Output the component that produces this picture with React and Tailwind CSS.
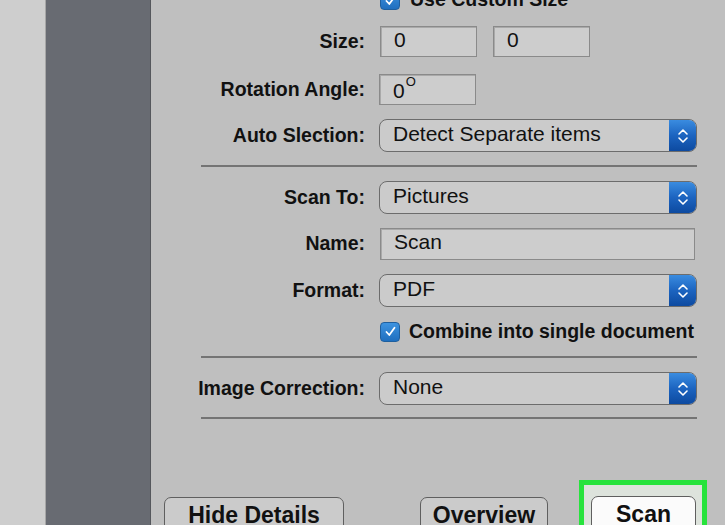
import React from "react";

// ------------------------------------------------------------------
// small pieces
// ------------------------------------------------------------------
const Check = ({ className = "" }) => (
  <span
    className={`flex h-[20px] w-[20px] shrink-0 items-center justify-center rounded-[4px] border border-[#1f5f9e] bg-gradient-to-b from-[#3d93e0] to-[#1f6fbf] ${className}`}
  >
    <svg width="13" height="13" viewBox="0 0 13 13" fill="none">
      <path d="M2.5 7 L5.3 10 L10.5 2.8" stroke="white" strokeWidth="1.8" strokeLinecap="round" strokeLinejoin="round" />
    </svg>
  </span>
);

const Label = ({ children }) => (
  <span className="flex w-[165px] shrink-0 justify-end whitespace-nowrap pr-[1px] text-[19.5px] font-bold text-[#111]">
    <span>{children}</span>
  </span>
);

const Select = ({ value }) => (
  <div className="ml-[13px] flex h-[33px] w-[318px] items-stretch overflow-hidden rounded-[8px] border border-[#6c6c6c] bg-[#cbcbcb]">
    <span className="flex-1 pl-[13px] pb-[5px] text-[21px] leading-[27px] text-[#111]">{value}</span>
    <span className="flex w-[27px] items-center justify-center bg-gradient-to-b from-[#3a8ce0] via-[#1c64c0] to-[#0d4aa0]">
      <svg width="12" height="20" viewBox="0 0 12 20" fill="none">
        <path d="M2 8 L6 4 L10 8" stroke="white" strokeWidth="1.6" strokeLinecap="round" strokeLinejoin="round" />
        <path d="M2 12 L6 16 L10 12" stroke="white" strokeWidth="1.6" strokeLinecap="round" strokeLinejoin="round" />
      </svg>
    </span>
  </div>
);

const Field = ({ children, className = "" }) => (
  <div
    className={`flex h-[31px] items-center border border-[#8a8a8a] bg-[#cdcdcd] pl-[13px] pb-[4px] text-[21px] text-[#111] shadow-[inset_1px_1px_0_#a9a9a9] ${className}`}
  >
    {children}
  </div>
);

const Divider = ({ className = "" }) => <div className={`h-[2px] bg-[#747474] ${className}`} />;

// ------------------------------------------------------------------
// App
// ------------------------------------------------------------------
export default function App() {
  return (
    <div className="flex h-[525px] w-[725px] overflow-hidden font-['Liberation_Sans',Arial,sans-serif]">
      {/* left edge + sidebar */}
      <div className="w-[45px] shrink-0 bg-[#cecece]" />
      <div className="w-[106px] shrink-0 border-l border-r border-l-[#a7a7a7] border-r-[#55575c] bg-[#686b72]" />

      {/* main panel */}
      <div className="flex flex-1 flex-col bg-[#bfbfbf]">
        <div className="flex flex-col pl-[50px] pr-[28px]">
          <div className="-mt-[10px] flex h-[20px] items-center">
            <span className="w-[165px] shrink-0" />
            <Check className="ml-[14px]" />
            <span className="ml-[10px] text-[19.5px] font-bold text-[#111]">Use Custom Size</span>
          </div>

          <div className="mt-[16px] flex h-[31px] items-center">
            <Label>Size:</Label>
            <Field className="ml-[14px] w-[97px]">0</Field>
            <Field className="ml-[16px] w-[97px]">0</Field>
          </div>

          <div className="mt-[17px] flex h-[31px] items-center">
            <Label>Rotation Angle:</Label>
            <Field className="ml-[13px] w-[97px] items-start pt-[0px]">
              <span>0</span>
              <span className="ml-[1px] text-[13px] leading-[13px]">O</span>
            </Field>
          </div>

          <div className="mt-[14px] flex items-center">
            <Label>Auto Slection:</Label>
            <Select value="Detect Separate items" />
          </div>

          <Divider className="mt-[13px]" />

          <div className="mt-[14px] flex items-center">
            <Label>Scan To:</Label>
            <Select value="Pictures" />
          </div>

          <div className="mt-[14px] flex items-center">
            <Label>Name:</Label>
            <Field className="ml-[14px] h-[32px] w-[315px]">Scan</Field>
          </div>

          <div className="mt-[14px] flex items-center">
            <Label>Format:</Label>
            <Select value="PDF" />
          </div>

          <div className="mt-[14px] flex h-[21px] items-center">
            <span className="w-[165px] shrink-0" />
            <Check className="ml-[14px]" />
            <span className="ml-[9px] whitespace-nowrap text-[19.5px] font-bold text-[#111]">Combine into single document</span>
          </div>

          <Divider className="mt-[14px]" />

          <div className="mt-[14px] flex items-center">
            <Label>Image Correction:</Label>
            <Select value="None" />
          </div>

          <Divider className="mt-[12px]" />
        </div>

        {/* bottom buttons */}
        <div className="mt-[61px] flex items-start">
          <button className="ml-[13px] mt-[17px] h-[40px] w-[180px] rounded-t-[7px] border border-[#5f5f5f] bg-[#cbcbcb] pb-[9px] text-[23px] font-bold text-[#111]">
            Hide Details
          </button>
          <button className="ml-[76px] mt-[17px] h-[40px] w-[128px] rounded-t-[7px] border border-[#5f5f5f] bg-[#cbcbcb] pb-[9px] text-[23px] font-bold text-[#111]">
            Overview
          </button>
          <div className="ml-[31px] h-[60px] w-[128px] border-[5px] border-b-0 border-[#27e33c] bg-[#dde3dc] pl-[7px] pt-[11px]">
            <button className="h-[40px] w-[105px] rounded-t-[7px] border border-[#5f5f5f] bg-[#fbfbfb] pb-[9px] text-[23px] font-bold text-[#111]">
              Scan
            </button>
          </div>
        </div>
      </div>
    </div>
  );
}
